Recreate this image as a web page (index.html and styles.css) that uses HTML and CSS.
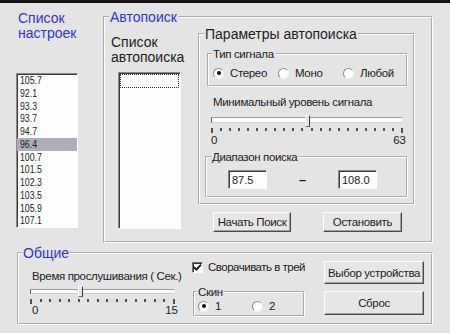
FILE: index.html
```html
<!DOCTYPE html>
<html lang="ru">
<head>
    <meta charset="UTF-8">
    <meta name="viewport" content="width=device-width, initial-scale=1.0">
    <title>Настройки тюнера</title>
    <link rel="stylesheet" href="styles.css">
</head>
<body>
<div class="window">
    <div class="topRow">
        <div class="presets">
            <div class="heading blue">Список<br>настроек</div>
            <div class="listBox presetList">
                <div class="item"><span>105.7</span></div>
                <div class="item"><span>92.1</span></div>
                <div class="item"><span>93.3</span></div>
                <div class="item"><span>93.7</span></div>
                <div class="item"><span>94.7</span></div>
                <div class="item selected"><span>96.4</span></div>
                <div class="item"><span>100.7</span></div>
                <div class="item"><span>101.5</span></div>
                <div class="item"><span>102.3</span></div>
                <div class="item"><span>103.5</span></div>
                <div class="item"><span>105.9</span></div>
                <div class="item"><span>107.1</span></div>
            </div>
        </div>

        <fieldset class="group autoGroup">
            <legend class="heading blue">Автопоиск</legend>
            <div class="autoBody">
                <div class="autoList">
                    <div class="heading">Список<br>автопоиска</div>
                    <div class="listBox foundList">
                        <div class="focusRow"></div>
                    </div>
                </div>
                <div class="params">
                    <fieldset class="group paramGroup">
                        <legend class="heading">Параметры автопоиска</legend>
                        <fieldset class="group signalGroup">
                            <legend>Тип сигнала</legend>
                            <div class="radioRow">
                                <label class="radio"><span class="radioMark on"></span>Стерео</label>
                                <label class="radio"><span class="radioMark"></span>Моно</label>
                                <label class="radio"><span class="radioMark"></span>Любой</label>
                            </div>
                        </fieldset>
                        <div class="caption levelCaption">Минимальный уровень сигнала</div>
                        <div class="slider levelSlider">
                            <div class="track"></div>
                            <div class="thumb" style="left: 48.7%"></div>
                        </div>
                        <div class="ticks levelTicks">
                            <span class="tick"></span><span class="tick"></span><span class="tick"></span><span class="tick"></span>
                            <span class="tick"></span><span class="tick"></span><span class="tick"></span><span class="tick"></span>
                            <span class="tick"></span><span class="tick"></span><span class="tick"></span><span class="tick"></span>
                            <span class="tick"></span><span class="tick"></span><span class="tick"></span><span class="tick"></span>
                            <span class="tick"></span><span class="tick"></span><span class="tick"></span><span class="tick"></span>
                            <span class="tick"></span><span class="tick"></span>
                        </div>
                        <div class="scale levelScale"><span>0</span><span>63</span></div>
                        <fieldset class="group rangeGroup">
                            <legend>Диапазон поиска</legend>
                            <div class="rangeRow">
                                <input class="edit" type="text" value="87.5">
                                <span class="dash">–</span>
                                <input class="edit" type="text" value="108.0">
                            </div>
                        </fieldset>
                    </fieldset>
                    <div class="searchButtons">
                        <button class="button startBtn">Начать Поиск</button>
                        <button class="button stopBtn">Остановить</button>
                    </div>
                </div>
            </div>
        </fieldset>
    </div>

    <fieldset class="group generalGroup">
        <legend class="heading blue">Общие</legend>
        <div class="generalBody">
            <div class="listenCol">
                <div class="caption">Время прослушивания ( Сек.)</div>
                <div class="slider timeSlider">
                    <div class="track"></div>
                    <div class="thumb" style="left: 33.1%"></div>
                </div>
                <div class="ticks timeTicks">
                    <span class="tick"></span><span class="tick"></span><span class="tick"></span><span class="tick"></span>
                    <span class="tick"></span><span class="tick"></span><span class="tick"></span><span class="tick"></span>
                    <span class="tick"></span><span class="tick"></span><span class="tick"></span><span class="tick"></span>
                    <span class="tick"></span><span class="tick"></span><span class="tick"></span><span class="tick"></span>
                </div>
                <div class="scale timeScale"><span>0</span><span>15</span></div>
            </div>
            <div class="optionsCol">
                <label class="check">
                    <span class="checkMark"><svg width="9" height="9" viewBox="0 0 9 9"><path d="M1 4.2 L3.4 6.6 L8 1.6" fill="none" stroke="#111" stroke-width="1.8"/></svg></span>Сворачивать в трей
                </label>
                <fieldset class="group skinGroup">
                    <legend>Скин</legend>
                    <div class="skinRow">
                        <label class="radio"><span class="radioMark on"></span>1</label>
                        <label class="radio"><span class="radioMark"></span>2</label>
                    </div>
                </fieldset>
            </div>
            <div class="deviceCol">
                <button class="button deviceBtn">Выбор устройства</button>
                <button class="button resetBtn">Сброс</button>
            </div>
        </div>
    </fieldset>
</div>
</body>
</html>
```

FILE: styles.css
```css
html, body {
    width: 450px;
    height: 333px;
    margin: 0;
    padding: 0;
    overflow: hidden;
    background: #e4e4e4;
}

body {
    font-family: "Liberation Sans", Arial, sans-serif;
    font-size: 11.5px;
    letter-spacing: -0.35px;
    color: #1c1c1c;
}

.window {
    border-top: 3px solid #141414;
}

.blue {
    color: #3434c4;
}

.heading {
    font-size: 14px;
    line-height: 15px;
    letter-spacing: 0;
}

/* group boxes */
.group {
    box-sizing: border-box;
    min-width: 0;
    margin: 0;
    border: 2px groove #fff;
}

.group legend {
    padding: 0 1px;
    line-height: 14px;
}

.group legend.heading {
    line-height: 16px;
}

/* sunken white boxes */
.listBox, .edit {
    box-sizing: border-box;
    background: #fdfdfd;
    border: 1px solid;
    border-color: #8a8a8a #fff #fff #8a8a8a;
    box-shadow: inset 1px 1px 0 #3c3c3c;
}

.topRow {
    display: flex;
    align-items: flex-start;
}

.presets {
    width: 62px;
    margin-left: 16px;
    padding-top: 8px;
}

.presets .heading {
    margin-left: 2px;
}

.presetList {
    height: 155px;
    margin-top: 32px;
    font-size: 11.5px;
    letter-spacing: 0;
}

.item {
    height: 12.75px;
    line-height: 12.75px;
    padding-left: 3px;
    white-space: nowrap;
}

/* the list font is a narrow one */
.item span {
    display: inline-block;
    transform: scaleX(0.76);
    transform-origin: left center;
}

.item.selected {
    background: #aeaeb9;
}

.autoGroup {
    width: 330px;
    margin: 6px 0 0 25px;
    padding: 1px 16px 9px 6px;
}

.autoGroup > legend {
    margin-left: -2px;
}

.autoBody {
    display: flex;
    align-items: flex-start;
}

.autoList {
    width: 80px;
    margin-top: 9px;
}

.foundList {
    width: 63px;
    height: 157px;
    margin: 7px 0 0 7px;
    padding: 1px 1px 0 1px;
}

.focusRow {
    height: 12px;
    border: 1px dotted #333;
}

.params {
    width: 217px;
    margin-left: 7px;
}

.paramGroup {
    width: 217px;
    padding: 5px 5px 5px 7px;
}

.paramGroup > legend {
    margin-left: -3px;
}

.signalGroup {
    width: 201px;
    padding: 5px 4px;
}

.signalGroup > legend {
    margin-left: -1px;
}

.radioRow {
    display: grid;
    grid-template-columns: 65px 65px 65px;
}

.radio, .check {
    display: flex;
    align-items: center;
    height: 14px;
    white-space: nowrap;
}

.radioMark {
    box-sizing: border-box;
    display: grid;
    place-items: center;
    width: 11px;
    height: 11px;
    margin-right: 6px;
    border-radius: 50%;
    background: #fff;
    border: 1px solid;
    border-color: #8c8c8c #f2f2f2 #f2f2f2 #8c8c8c;
}

.radioMark.on::after {
    content: "";
    width: 4px;
    height: 4px;
    border-radius: 50%;
    background: #111;
}

.caption {
    line-height: 14px;
    white-space: nowrap;
}

.levelCaption {
    margin: 8px 0 0 6px;
}

/* trackbars */
.slider {
    position: relative;
    display: flow-root;
}

.track {
    box-sizing: border-box;
    height: 6px;
    margin-top: 4px;
    background: #fbfbfb;
    border: 1px solid;
    border-color: #9c9c9c #e8e8e8 #cfcfcf #5c5c5c;
}

.thumb {
    position: absolute;
    top: 2px;
    box-sizing: border-box;
    width: 5px;
    height: 12px;
    background: #e4e4e4;
    border: 1px solid;
    border-color: #fff #3a3a3a #6a6a6a #fff;
}

.ticks {
    display: flex;
    justify-content: space-between;
    align-items: flex-start;
    height: 5px;
}

.tick {
    flex: none;
    width: 2px;
    height: 3px;
    background-color: #505050;
}

.tick:first-child,
.tick:last-child {
    height: 5px;
}

.scale {
    display: flex;
    justify-content: space-between;
    line-height: 14px;
    letter-spacing: 0;
}

.levelSlider {
    width: 192px;
    height: 14px;
    margin: 4px 0 0 4px;
}

.levelTicks {
    width: 192px;
    margin: 1px 0 0 4px;
}

.levelScale {
    width: 195px;
    margin-left: 4px;
}

.rangeGroup {
    width: 203px;
    margin: 3px 0 0 -2px;
    padding: 6px 4px 7px 4px;
}

.rangeRow {
    display: flex;
    align-items: center;
    padding-left: 17px;
}

.edit {
    width: 39px;
    height: 19px;
    margin: 0;
    padding: 0 0 0 3px;
    font: inherit;
    font-size: 11px;
    letter-spacing: 0;
    color: inherit;
    outline: none;
}

.dash {
    width: 71px;
    text-align: center;
    font-weight: bold;
    font-size: 13px;
}

/* push buttons */
.button {
    box-sizing: border-box;
    margin: 0;
    padding: 0;
    font: inherit;
    letter-spacing: inherit;
    color: inherit;
    background: #e6e6e6;
    border: 1px solid;
    border-color: #fff #4a4a4a #4a4a4a #fff;
    box-shadow: inset -1px -1px 0 #a2a2a2;
}

.searchButtons {
    display: flex;
    gap: 32px;
    margin-top: 7px;
    padding-left: 15px;
}

.startBtn {
    width: 78px;
    height: 20px;
}

.stopBtn {
    width: 79px;
    height: 20px;
}

.generalGroup {
    width: 416px;
    margin: 2px 0 0 17px;
    padding: 0 7px 6px 13px;
}

.generalGroup > legend {
    margin-left: -10px;
}

.generalBody {
    display: flex;
    align-items: flex-start;
}

.listenCol {
    width: 150px;
}

.listenCol .caption {
    margin-top: 8px;
}

.timeSlider {
    width: 145px;
    height: 12px;
    margin: 2px 0 0 -2px;
}

.timeSlider .track {
    height: 5px;
}

.timeSlider .thumb {
    top: 1px;
    height: 11px;
}

.timeTicks {
    width: 145px;
    margin: 2px 0 0 -2px;
}

.timeScale {
    width: 146px;
    margin-top: -1px;
}

.optionsCol {
    width: 114px;
    margin-left: 10px;
}

.check {
    margin-top: -1px;
    letter-spacing: -0.5px;
}

.checkMark {
    box-sizing: border-box;
    display: grid;
    place-items: center;
    flex: none;
    width: 11px;
    height: 11px;
    margin-right: 5px;
    background: #fff;
    border: 1px solid;
    border-color: #707070 #fff #fff #707070;
    box-shadow: inset 1px 1px 0 #303030;
}

.skinGroup {
    width: 112px;
    margin: 11px 0 0 1px;
    padding: 0 4px 2px 3px;
}

.skinGroup > legend {
    margin-left: -1px;
}

.skinRow {
    display: grid;
    grid-template-columns: 54px 54px;
}

.deviceCol {
    display: flex;
    flex-direction: column;
    gap: 7px;
    width: 100px;
    margin-left: 18px;
}

.deviceBtn {
    height: 23px;
}

.resetBtn {
    height: 24px;
}
```
